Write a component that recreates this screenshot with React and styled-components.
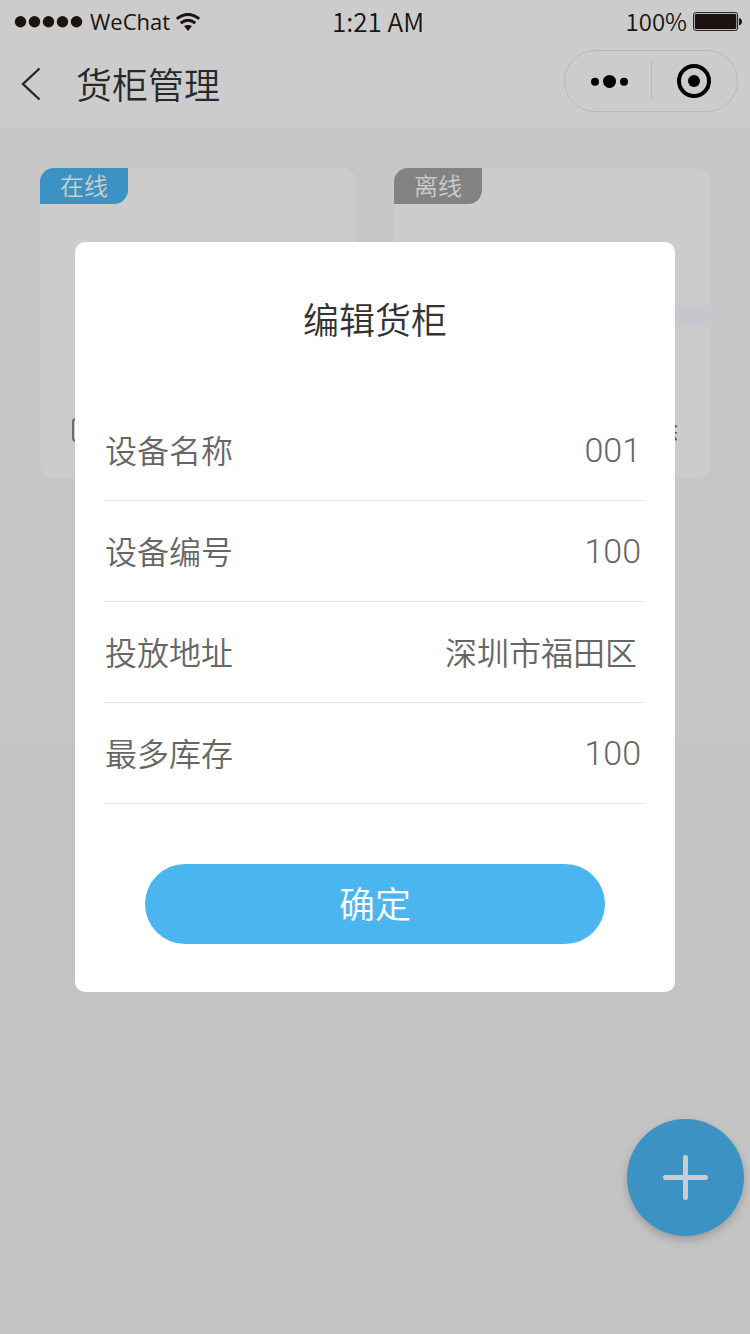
import { useState } from 'react'
import styled, { createGlobalStyle } from 'styled-components'

const GlobalStyle = createGlobalStyle`
  *{
    box-sizing: border-box;
  }
  body{
    margin: 0;
    background: #f4f4f4;
    font-family: "Noto Sans CJK SC", sans-serif;
    font-weight: 350;
  }
  button, input{
    font: inherit;
    color: inherit;
    border: 0;
    padding: 0;
    background: none;
  }
  button{
    cursor: pointer;
  }
  h1, h2{
    margin: 0;
    font-weight: inherit;
  }
`

const Page = styled.div`
  min-height: 100vh;
`

const StatusBar = styled.div`
  display: grid;
  grid-template-columns: 1fr auto 1fr;
  align-items: center;
  height: 44px;
  padding: 0 8px 0 14px;
  background: #fff;
  color: #231815;
  font-size: 26px;
  line-height: 40px;
`

const StatusGroup = styled.div`
  display: flex;
  align-items: center;
  justify-content: ${({ $end }) => ($end ? 'flex-end' : 'flex-start')};
  gap: 6px;
`

const Clock = styled.span`
  padding-bottom: 2px;
`

const Carrier = styled.span`
  padding-bottom: 2px;
  font-family: "Open Sans", sans-serif;
  font-size: 22px;
  font-weight: 400;
`

const Percent = styled.span`
  padding-bottom: 2px;
  font-size: 24px;
`

const NavBar = styled.header`
  display: flex;
  align-items: center;
  height: 84px;
  padding: 0 12px 4px 20px;
  background: #fff;
  color: #333;
`

const BackButton = styled.button`
  display: flex;
  width: 24px;
  margin-right: 32px;
`

const NavTitle = styled.h1`
  flex: 1;
  padding-bottom: 2px;
  font-size: 36px;
  line-height: 52px;
`

const Capsule = styled.div`
  display: flex;
  align-items: center;
  width: 174px;
  height: 62px;
  margin-bottom: 6px;
  border: 1px solid #e5e5e5;
  border-radius: 31px;
  button{
    flex: 1;
    display: flex;
    align-items: center;
    justify-content: center;
    height: 38px;
  }
  button + button{
    border-left: 1px solid #e5e5e5;
  }
`

const Main = styled.main`
  display: grid;
  grid-template-columns: 1fr 1fr;
  align-items: start;
  gap: 38px;
  min-height: 615px;
  padding: 40px;
  background: #f8f8f8;
`

const Card = styled.section`
  display: flex;
  flex-direction: column;
  height: 310px;
  border-radius: 14px;
  background: #fff;
`

const Tag = styled.span`
  width: 88px;
  height: 36px;
  border-radius: 14px 0;
  background: ${({ $online }) => ($online ? '#4cb7f3' : '#a3a3a3')};
  color: #fff;
  font-size: 24px;
  line-height: 34px;
  text-align: center;
`

const Strip = styled.div`
  height: 22px;
  margin-top: 101px;
  background: #f7f9ff;
`

const CardFooter = styled.div`
  display: flex;
  justify-content: ${({ $end }) => ($end ? 'flex-end' : 'flex-start')};
  margin-top: auto;
  padding: 0 32px 30px;
  color: #666;
  font-size: 24px;
  line-height: 36px;
  button{
    display: flex;
    align-items: center;
    height: 36px;
  }
`

const AddButton = styled.button`
  position: fixed;
  right: 6px;
  bottom: 98px;
  display: flex;
  align-items: center;
  justify-content: center;
  width: 117px;
  height: 117px;
  border-radius: 50%;
  background: #4cb7f3;
  box-shadow: 0 4px 8px rgba(0, 0, 0, .2);
`

const Overlay = styled.div`
  position: fixed;
  inset: 0;
  display: flex;
  align-items: center;
  justify-content: center;
  padding-bottom: 100px;
  background: rgba(0, 0, 0, .2);
`

const Dialog = styled.form`
  width: 80%;
  padding: 50px 30px 48px;
  border-radius: 10px;
  background: #fff;
`

const DialogTitle = styled.h2`
  margin-bottom: 56px;
  color: #333;
  font-size: 36px;
  line-height: 52px;
  text-align: center;
`

const Field = styled.div`
  display: flex;
  align-items: center;
  height: 101px;
  padding-right: 4px;
  border-bottom: 1px solid #e5e5e5;
  color: #666;
  font-size: 32px;
  label{
    flex: none;
    padding-bottom: 2px;
  }
  input{
    flex: 1;
    min-width: 0;
    height: 60px;
    padding-right: ${({ $number }) => ($number ? '0' : '4px')};
    padding-bottom: ${({ $number }) => ($number ? '0' : '2px')};
    font-family: ${({ $number }) => ($number ? 'Roboto, sans-serif' : 'inherit')};
    font-size: ${({ $number }) => ($number ? '34px' : '32px')};
    text-align: right;
    outline: none;
  }
`

const Submit = styled.button`
  display: block;
  width: calc(100% - 80px);
  height: 80px;
  margin: 60px auto 0;
  padding-bottom: 4px;
  border-radius: 40px;
  background: #4bb5f0;
  color: #fff;
  font-size: 36px;
  line-height: 52px;
`

const fields = [
  { id: 'name', label: '设备名称', number: true },
  { id: 'code', label: '设备编号', number: true },
  { id: 'address', label: '投放地址', number: false },
  { id: 'stock', label: '最多库存', number: true },
]

const SignalIcon = () => (
  <svg width="70" height="12" viewBox="0 0 70 12" fill="#231815">
    {[6, 20, 34, 48, 62].map(x => <circle key={x} cx={x + .5} cy="5.8" r="5.7" />)}
  </svg>
)

const WifiIcon = () => (
  <svg width="24" height="18" viewBox="0 0 24 18" fill="none" stroke="#231815" strokeWidth="3">
    <path d="M.8 5.8Q12-3 23.2 5.8" />
    <path d="M4.7 10.2Q12 4.4 19.3 10.2" />
    <path d="M8 13Q12 10.8 16 13L12 18Z" fill="#231815" stroke="none" />
  </svg>
)

const BatteryIcon = () => (
  <svg width="49" height="20" viewBox="0 0 49 20">
    <rect x=".6" y=".6" width="44" height="17.8" rx="2" fill="none" stroke="#231815" strokeWidth="1" />
    <rect x="1.9" y="2" width="41.4" height="15" rx="1" fill="#231815" />
    <path d="M46 6Q49 7 49 9.7T46 13.4Z" fill="#231815" />
  </svg>
)

const App = () => {
  const [values, setValues] = useState({
    name: '001',
    code: '100',
    address: '深圳市福田区',
    stock: '100',
  })

  const handleChange = (e) => {
    setValues({ ...values, [e.target.id]: e.target.value })
  }

  return (
    <Page>
      <GlobalStyle />
      <StatusBar>
        <StatusGroup>
          <SignalIcon />
          <Carrier>WeChat</Carrier>
          <WifiIcon />
        </StatusGroup>
        <Clock>1:21 AM</Clock>
        <StatusGroup $end>
          <Percent>100%</Percent>
          <BatteryIcon />
        </StatusGroup>
      </StatusBar>

      <NavBar>
        <BackButton type="button" aria-label="返回">
          <svg width="24" height="34" viewBox="0 0 24 34" fill="none" stroke="#333" strokeWidth="2.4">
            <path d="M19.5 1.5L3 17L19.5 32.5" />
          </svg>
        </BackButton>
        <NavTitle>货柜管理</NavTitle>
        <Capsule>
          <button type="button" aria-label="更多">
            <svg width="40" height="16" viewBox="0 0 40 16" fill="#000">
              <circle cx="7" cy="8.8" r="4" />
              <circle cx="21.5" cy="8.4" r="6.5" />
              <circle cx="36" cy="8.8" r="4" />
            </svg>
          </button>
          <button type="button" aria-label="关闭">
            <svg width="34" height="34" viewBox="0 0 34 34">
              <circle cx="17" cy="17" r="15" fill="none" stroke="#000" strokeWidth="4" />
              <circle cx="17" cy="17" r="6" fill="#000" />
            </svg>
          </button>
        </Capsule>
      </NavBar>

      <Main>
        <Card>
          <Tag $online>在线</Tag>
          <CardFooter>
            <button type="button" aria-label="编辑">
              <svg width="22" height="24" viewBox="0 0 22 24" fill="none" stroke="#888" strokeWidth="2">
                <rect x="1" y="1" width="20" height="22" rx="3" />
              </svg>
            </button>
          </CardFooter>
        </Card>
        <Card>
          <Tag>离线</Tag>
          <Strip />
          <CardFooter $end>
            <button type="button">删除</button>
          </CardFooter>
        </Card>
      </Main>

      <AddButton type="button" aria-label="添加">
        <svg width="47" height="47" viewBox="0 0 47 47" stroke="#fff" strokeWidth="5" strokeLinecap="round">
          <path d="M23.5 3.5V43.5M3.5 23.5H43.5" />
        </svg>
      </AddButton>

      <Overlay>
        <Dialog role="dialog" aria-labelledby="dialog-title" onSubmit={e => e.preventDefault()}>
          <DialogTitle id="dialog-title">编辑货柜</DialogTitle>
          {fields.map(({ id, label, number }) => (
            <Field key={id} $number={number}>
              <label htmlFor={id}>{label}</label>
              <input id={id} type="text" value={values[id]} onChange={handleChange} />
            </Field>
          ))}
          <Submit type="submit">确定</Submit>
        </Dialog>
      </Overlay>
    </Page>
  )
}

export default App
